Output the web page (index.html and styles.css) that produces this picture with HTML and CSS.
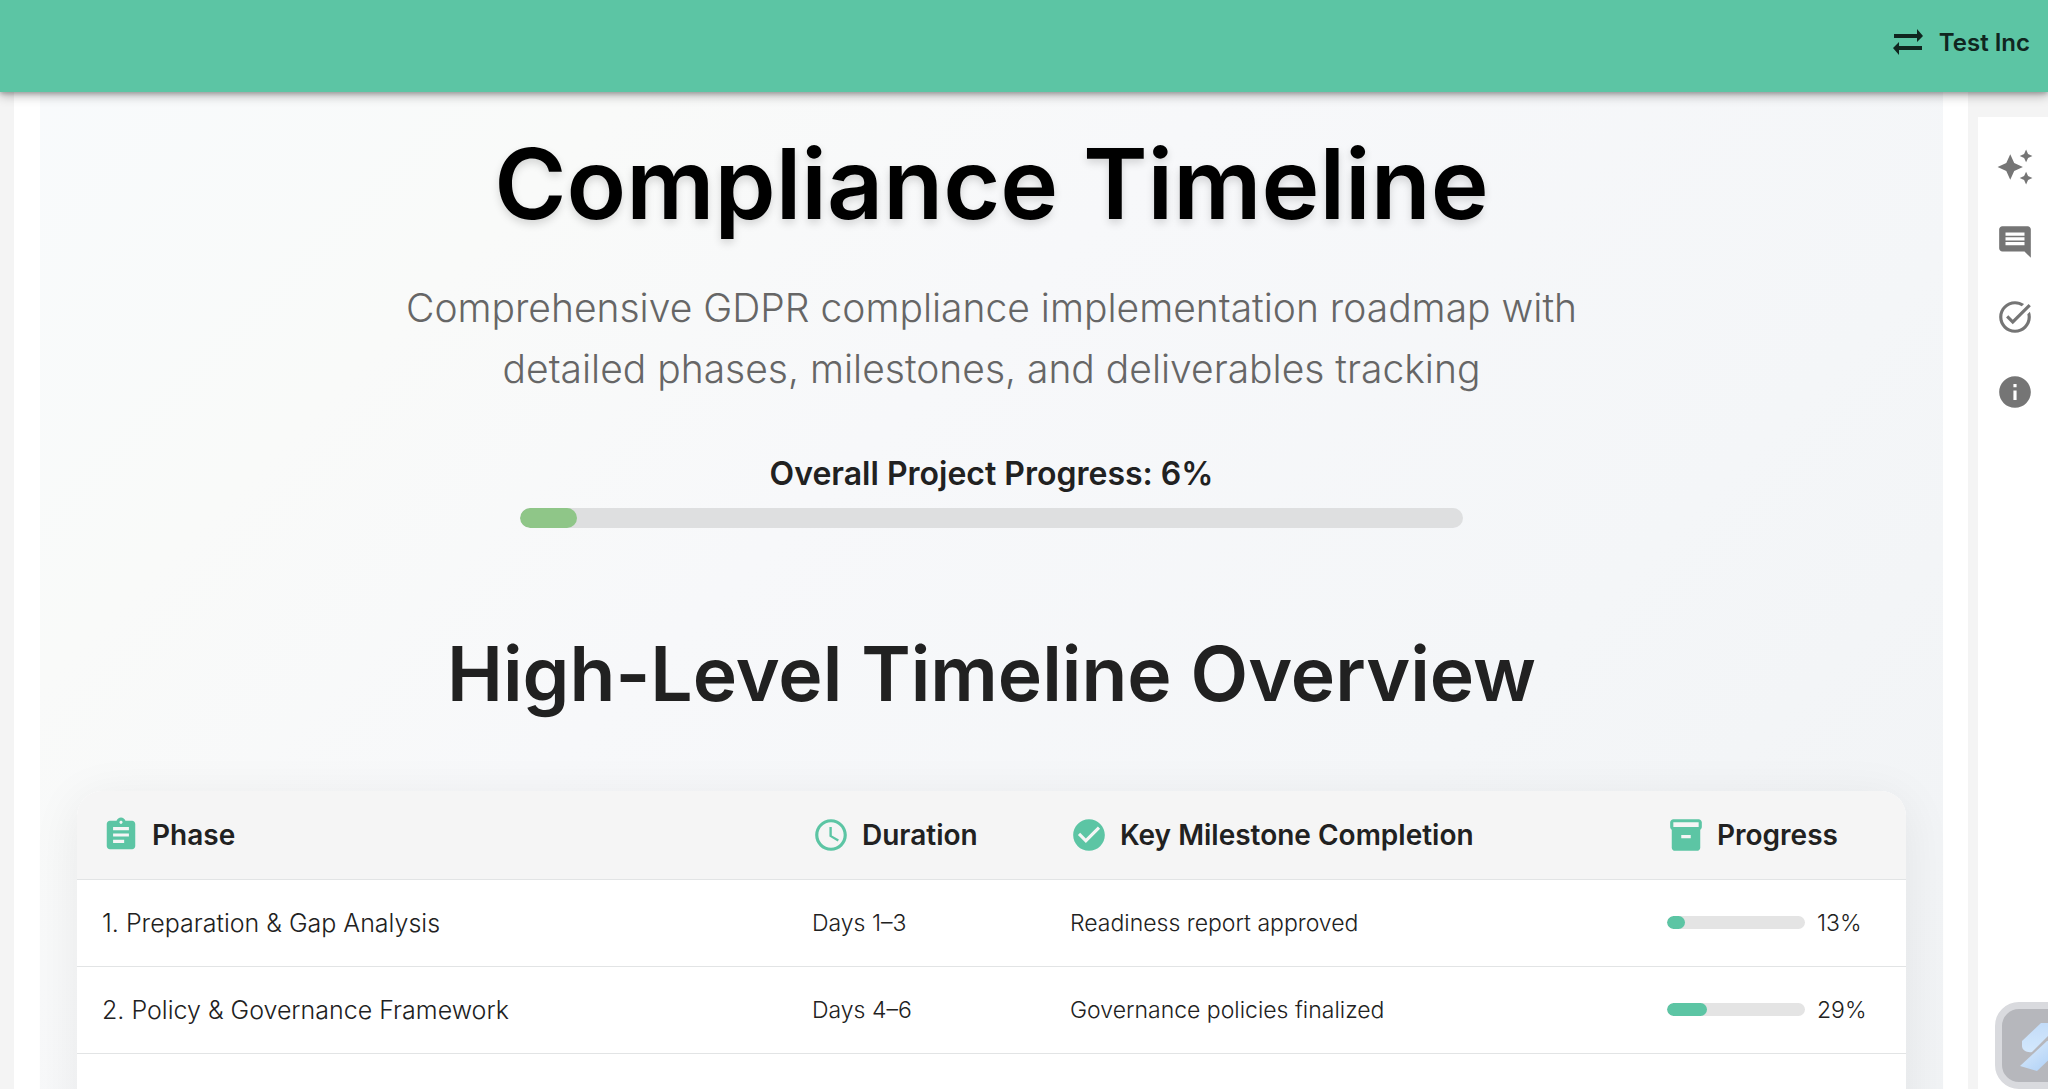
FILE: index.html
```html
<!DOCTYPE html>
<html lang="en">
<head>
  <meta charset="UTF-8">
  <meta name="viewport" content="width=device-width, initial-scale=1.0">
  <title>Compliance Timeline</title>
  <link rel="stylesheet" href="styles.css">
</head>
<body>

<header class="topbar">
  <button class="company" type="button">
    <svg class="swap-icon" viewBox="0 0 32 26" aria-hidden="true">
      <path d="M2 5h23V0l6 7-6 6V9H2zM30 17H7v-4l-6 6 6 7v-5h23z"/>
    </svg>
    Test Inc
  </button>
</header>

<div class="layout">
  <main class="page">
    <div class="content">
      <section class="hero">
        <h1>Compliance Timeline</h1>
        <p class="subtitle">Comprehensive GDPR compliance implementation roadmap with<br>detailed phases, milestones, and deliverables tracking</p>
        <div class="overall">
          <p class="overall-label">Overall Project Progress: 6%</p>
          <div class="overall-bar"><div class="overall-fill" style="width: 6%"></div></div>
        </div>
      </section>

      <section class="overview">
        <h2>High-Level Timeline Overview</h2>
        <div class="card">
          <table>
            <colgroup>
              <col class="col-phase">
              <col class="col-duration">
              <col class="col-milestone">
              <col class="col-progress">
            </colgroup>
            <thead>
              <tr>
                <th scope="col"><div class="th">
                  <svg viewBox="0 0 24 24" aria-hidden="true"><path d="M19 3h-4.180C14.400 1.840 13.300 1 12 1c-1.300 0-2.400.840-2.820 2H5c-1.100 0-2 .9-2 2v14c0 1.100.9 2 2 2h14c1.100 0 2-.9 2-2V5c0-1.100-.9-2-2-2zm-7 0c.550 0 1 .450 1 1s-.450 1-1 1-1-.450-1-1 .450-1 1-1zm2 14H7v-2h7v2zm3-4H7v-2h10v2zm0-4H7V7h10v2z"/></svg>
                  Phase
                </div></th>
                <th scope="col"><div class="th">
                  <svg viewBox="0 0 24 24" aria-hidden="true"><path d="M11.990 2C6.470 2 2 6.480 2 12s4.470 10 9.990 10C17.520 22 22 17.520 22 12S17.520 2 11.990 2zM12 20c-4.420 0-8-3.580-8-8s3.580-8 8-8 8 3.580 8 8-3.580 8-8 8zm.5-13H11v6l5.250 3.150.750-1.230-4.500-2.670z"/></svg>
                  Duration
                </div></th>
                <th scope="col"><div class="th">
                  <svg viewBox="0 0 24 24" aria-hidden="true"><path d="M12 2C6.480 2 2 6.480 2 12s4.480 10 10 10 10-4.480 10-10S17.520 2 12 2zm-2 15l-5-5 1.410-1.410L10 14.170l7.590-7.590L19 8l-9 9z"/></svg>
                  Key Milestone Completion
                </div></th>
                <th scope="col"><div class="th">
                  <svg viewBox="0 0 24 24" aria-hidden="true"><path fill-rule="evenodd" d="M20 2H4c-1 0-2 .9-2 2v3.010c0 .720.430 1.340 1 1.690V20c0 1.100 1.100 2 2 2h14c.9 0 2-.9 2-2V8.700c.570-.350 1-.970 1-1.690V4c0-1.100-1-2-2-2zm-5 12H9v-2h6v2zm5-7H4V4h16v3z"/></svg>
                  Progress
                </div></th>
              </tr>
            </thead>
            <tbody>
              <tr>
                <td class="phase">1. Preparation &amp; Gap Analysis</td>
                <td>Days 1–3</td>
                <td>Readiness report approved</td>
                <td><div class="progress"><div class="bar"><div class="fill" style="width: 13%"></div></div>13%</div></td>
              </tr>
              <tr>
                <td class="phase">2. Policy &amp; Governance Framework</td>
                <td>Days 4–6</td>
                <td>Governance policies finalized</td>
                <td><div class="progress"><div class="bar"><div class="fill" style="width: 29%"></div></div>29%</div></td>
              </tr>
              <tr>
                <td class="phase"></td>
                <td></td>
                <td></td>
                <td></td>
              </tr>
            </tbody>
          </table>
        </div>
      </section>
    </div>
  </main>

  <aside class="tools">
    <button type="button" aria-label="Assistant">
      <svg viewBox="0 0 24 24"><path d="M19 9l1.250-2.750L23 5l-2.750-1.250L19 1l-1.250 2.750L15 5l2.750 1.250L19 9zm-7.500.5L9 4 6.500 9.500 1 12l5.500 2.500L9 20l2.500-5.500L17 12l-5.500-2.500zM19 15l-1.250 2.750L15 19l2.750 1.250L19 23l1.250-2.750L23 19l-2.750-1.250L19 15z"/></svg>
    </button>
    <button type="button" aria-label="Comments">
      <svg viewBox="0 0 24 24"><path d="M21.990 4c0-1.100-.890-2-1.990-2H4c-1.100 0-2 .9-2 2v12c0 1.100.9 2 2 2h14l4 4-.010-18zM18 14H6v-2h12v2zm0-3H6V9h12v2zm0-3H6V6h12v2z"/></svg>
    </button>
    <button type="button" aria-label="Tasks">
      <svg viewBox="0 0 24 24"><path d="M22 5.180L10.590 16.600l-4.240-4.240 1.410-1.410 2.830 2.830 10-10L22 5.180zm-2.210 5.040c.130.570.210 1.170.210 1.780 0 4.420-3.580 8-8 8s-8-3.580-8-8 3.580-8 8-8c1.580 0 3.040.460 4.280 1.250l1.440-1.440C16.100 2.670 14.130 2 12 2 6.480 2 2 6.480 2 12s4.480 10 10 10 10-4.480 10-10c0-1.190-.220-2.330-.6-3.390l-1.610 1.610z"/></svg>
    </button>
    <button type="button" aria-label="Information">
      <svg viewBox="0 0 24 24"><path d="M12 2C6.480 2 2 6.480 2 12s4.480 10 10 10 10-4.480 10-10S17.520 2 12 2zm1 15h-2v-6h2v6zm0-8h-2V7h2v2z"/></svg>
    </button>
  </aside>
</div>

<button class="launcher" type="button" aria-label="Open widget">
  <svg viewBox="0 0 72 72">
    <defs>
      <linearGradient id="blue" x1="0" y1="0" x2="0" y2="1">
        <stop offset="0" stop-color="#c3dcf8"/>
        <stop offset="1" stop-color="#d3e8fd"/>
      </linearGradient>
      <linearGradient id="blue2" x1="0" y1="0" x2="1" y2="1">
        <stop offset="0" stop-color="#deedfc"/>
        <stop offset="1" stop-color="#a9cdf6"/>
      </linearGradient>
    </defs>
    <path fill="url(#blue)" d="M39 13h20L30 42c-5 1-10-2-10-6v-5z"/>
    <path fill="url(#blue2)" d="M45 31c4-1 10 1 11 5v5L35 61l-17-5z"/>
  </svg>
</button>

</body>
</html>
```
FILE: styles.css
```css
* {
  box-sizing: border-box;
}
body {
  margin: 0;
  height: 100vh;
  overflow: hidden;
  display: flex;
  flex-direction: column;
  background: #f4f4f4;
  color: #212121;
  font-family: Inter, "Open Sans", sans-serif;
}
h1, h2, p {
  margin: 0;
}
button {
  font: inherit;
  border: none;
  background: none;
  padding: 0;
  cursor: pointer;
}

/* top bar */
.topbar {
  position: relative;
  z-index: 1;
  flex: none;
  display: flex;
  justify-content: flex-end;
  align-items: center;
  height: 92px;
  padding: 0 18px 8px;
  background: #5cc5a4;
  box-shadow: 0 2px 4px rgba(0, 0, 0, 0.2), 0 4px 10px rgba(0, 0, 0, 0.26);
}
.company {
  display: flex;
  align-items: center;
  gap: 15px;
  color: #10261f;
  font-size: 24px;
  font-weight: 600;
}
.swap-icon {
  width: 32px;
  height: 26px;
  fill: currentColor;
}

.layout {
  flex: 1;
  display: flex;
  min-height: 0;
  padding-left: 14px;
}
.page {
  flex: 1;
  padding: 0 25px 0 26px;
  background: #fff;
  overflow: hidden;
}
.content {
  min-height: 100%;
  padding: 36px 37px 0;
  background: linear-gradient(135deg, #f8fafc 0%, #f9faf9 20%, #f7f8fa 40%, #f4f6f8 70%, #f1f3f5 100%);
}

/* title and overall progress */
.hero {
  text-align: center;
}
h1 {
  color: #000;
  font-size: 98px;
  line-height: 112px;
  font-weight: 600;
  text-shadow: 0 4px 8px rgba(0, 0, 0, 0.15);
}
.subtitle {
  margin-top: 37px;
  color: #666;
  font-size: 39px;
  line-height: 61px;
  font-weight: 300;
}
.overall {
  max-width: 943px;
  margin: 53px auto 0;
}
.overall-label {
  font-size: 32px;
  line-height: 44px;
  font-weight: 600;
}
.overall-bar {
  height: 20px;
  margin-top: 12px;
  border-radius: 10px;
  background: #dedfe0;
  overflow: hidden;
}
.overall-fill {
  height: 100%;
  border-radius: 10px;
  background: #8fc688;
}

/* overview table */
h2 {
  margin-top: 97px;
  font-size: 75px;
  line-height: 98px;
  font-weight: 600;
  text-align: center;
}
.card {
  margin-top: 68px;
  border-radius: 25px 25px 0 0;
  background: #fff;
  box-shadow: 0 8px 50px rgba(0, 0, 0, 0.07);
  overflow: hidden;
}
table {
  width: 100%;
  table-layout: fixed;
  border-collapse: collapse;
}
.col-duration {
  width: 258px;
}
.col-milestone {
  width: 597px;
}
.col-progress {
  width: 264px;
}
th, td {
  height: 87px;
  padding: 0 25px;
  border-bottom: 1px solid #e2e4e5;
  text-align: left;
  white-space: nowrap;
}
th {
  height: 88px;
  background: #f5f5f5;
  font-size: 28px;
  font-weight: 600;
}
td {
  font-size: 23px;
  font-weight: 300;
}
.phase {
  font-size: 25px;
}
.th {
  display: flex;
  align-items: center;
  gap: 12px;
}
.th svg {
  width: 38px;
  height: 38px;
  fill: #5cc5a4;
}
.progress {
  display: flex;
  align-items: center;
  gap: 12px;
}
.bar {
  width: 138px;
  height: 13px;
  border-radius: 7px;
  background: #e4e4e4;
  overflow: hidden;
}
.fill {
  height: 100%;
  border-radius: 7px;
  background: #5cc5a4;
}

/* right tools */
.tools {
  flex: none;
  display: flex;
  flex-direction: column;
  align-items: center;
  gap: 37px;
  width: 70px;
  margin: 25px 0 0 10px;
  padding: 31px 0 0 4px;
  background: #fff;
}
.tools svg {
  display: block;
  width: 38px;
  height: 38px;
  fill: #757575;
}

.launcher {
  position: fixed;
  right: -34px;
  bottom: 0;
  width: 87px;
  height: 87px;
  border: 7px solid #d9dade;
  border-radius: 24px;
  background: #b6b7bc;
}
.launcher svg {
  display: block;
  width: 72px;
  height: 72px;
}
```
